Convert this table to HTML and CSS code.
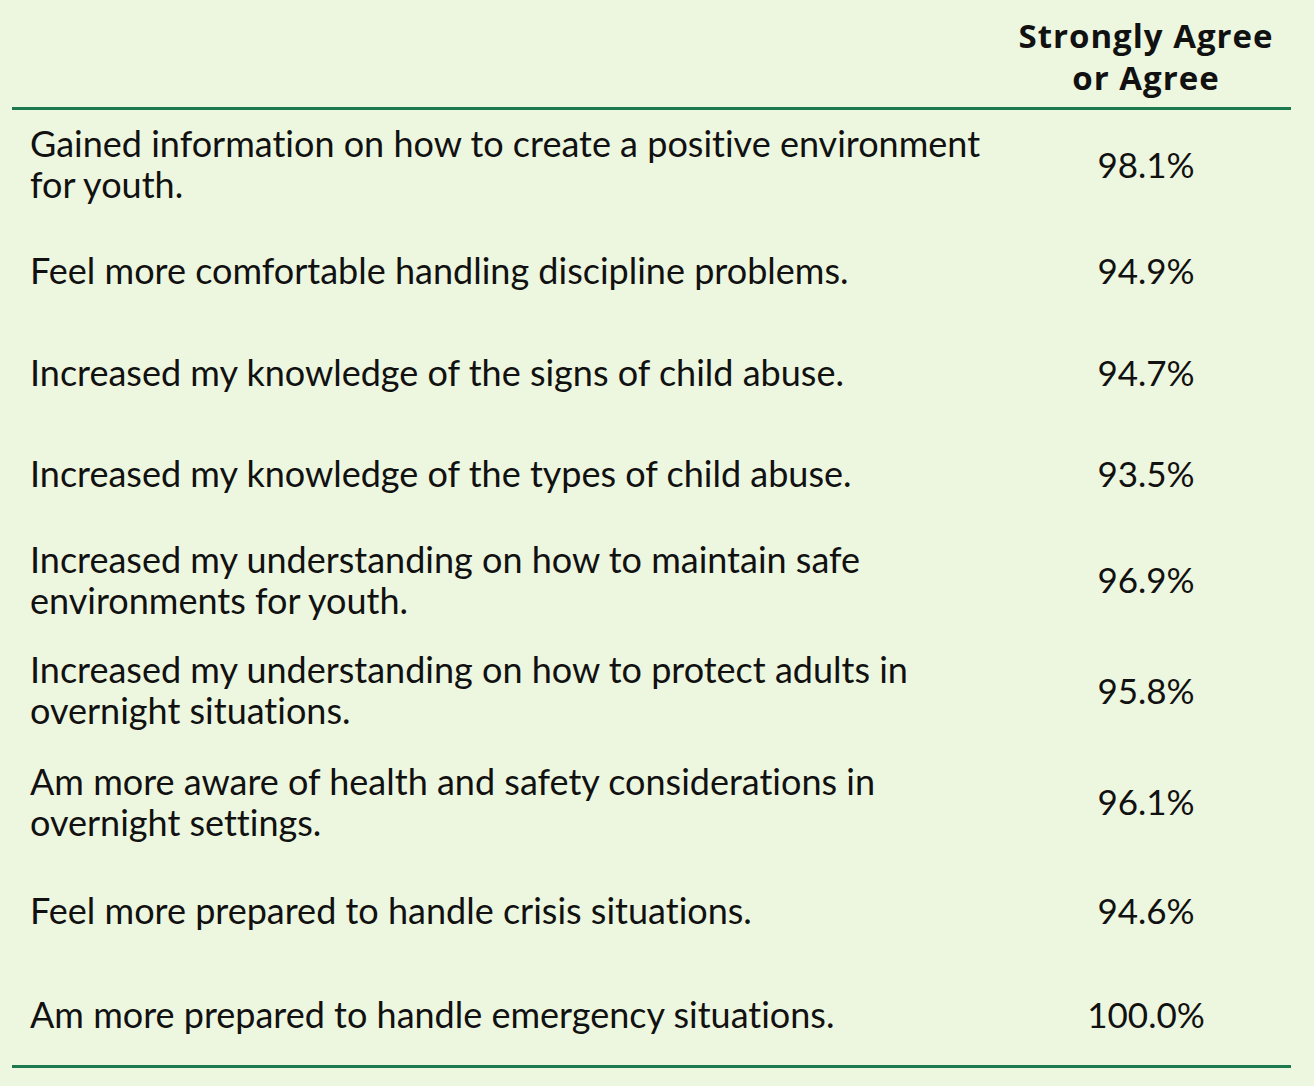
FILE: index.html
```html
<!DOCTYPE html>
<html lang="en">
<head>
<meta charset="utf-8">
<title>Survey results</title>
<link rel="stylesheet" href="styles.css">
</head>
<body>
<div class="table">
  <div class="head">
    <div class="head-label"></div>
    <div class="head-value">Strongly Agree<br>or Agree</div>
  </div>
  <div class="rows">
    <div class="row"><div class="label">Gained information on how to create a positive environment<br>for youth.</div><div class="value">98.1%</div></div>
    <div class="row"><div class="label">Feel more comfortable handling discipline problems.</div><div class="value">94.9%</div></div>
    <div class="row"><div class="label">Increased my knowledge of the signs of child abuse.</div><div class="value">94.7%</div></div>
    <div class="row"><div class="label">Increased my knowledge of the types of child abuse.</div><div class="value">93.5%</div></div>
    <div class="row"><div class="label">Increased my understanding on how to maintain safe<br>environments for youth.</div><div class="value">96.9%</div></div>
    <div class="row"><div class="label">Increased my understanding on how to protect adults in<br>overnight situations.</div><div class="value">95.8%</div></div>
    <div class="row"><div class="label">Am more aware of health and safety considerations in<br>overnight settings.</div><div class="value">96.1%</div></div>
    <div class="row"><div class="label">Feel more prepared to handle crisis situations.</div><div class="value">94.6%</div></div>
    <div class="row"><div class="label">Am more prepared to handle emergency situations.</div><div class="value">100.0%</div></div>
  </div>
</div>
</body>
</html>
```

FILE: styles.css
```css
html, body {
  margin: 0;
  padding: 0;
  background: #edf6df;
}

body {
  font-family: Lato, "Liberation Sans", sans-serif;
  font-variant-ligatures: none;
  color: #111;
}

.table {
  width: 1279px;
  margin-left: 12px;
}

.head {
  display: grid;
  grid-template-columns: 1fr 290px;
  box-sizing: border-box;
  border-bottom: 3px solid #1c7a4e;
  height: 110px;
}

.head-value {
  align-self: end;
  text-align: center;
  font-family: "Open Sans", Lato, sans-serif;
  font-weight: 700;
  font-size: 33px;
  letter-spacing: 1px;
  line-height: 42px;
  padding-bottom: 8px;
  white-space: nowrap;
}

.rows {
  border-bottom: 3px solid #1c7a4e;
}

.row {
  display: grid;
  grid-template-columns: 1fr 290px;
  align-items: center;
  font-size: 36px;
  line-height: 41px;
  white-space: nowrap;
}

.label {
  padding-left: 18px;
}

.value {
  text-align: center;
  font-size: 35px;
}

.row:nth-child(1) { height: 108px; }
.row:nth-child(2) { height: 104px; }
.row:nth-child(3) { height: 100px; }
.row:nth-child(4) { height: 103px; }
.row:nth-child(5) { height: 109px; }
.row:nth-child(6) { height: 112px; }
.row:nth-child(7) { height: 111px; }
.row:nth-child(8) { height: 106px; }
.row:nth-child(9) { height: 102px; }
```
